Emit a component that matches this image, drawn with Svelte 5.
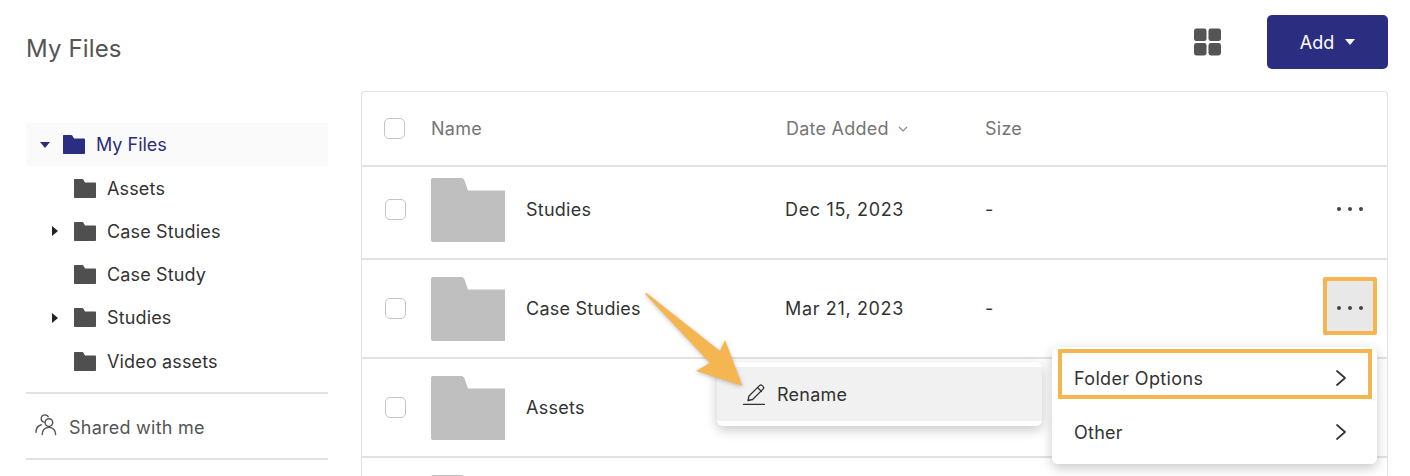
<script>
  const tree = [
    { name: "Assets", caret: false },
    { name: "Case Studies", caret: true },
    { name: "Case Study", caret: false },
    { name: "Studies", caret: true },
    { name: "Video assets", caret: false }
  ];

  // the last two rows sit behind the menu or below the fold, only their folders show
  const files = [
    { name: "Studies", date: "Dec 15, 2023", size: "-" },
    { name: "Case Studies", date: "Mar 21, 2023", size: "-", open: true },
    { name: "Assets", date: "", size: "" },
    { name: "", date: "", size: "" }
  ];
</script>

{#snippet smallFolder()}
  <svg class="small-folder" viewBox="0 0 22 19" aria-hidden="true">
    <path d="M1 0h7.2c.5 0 .9.2 1.1.6L11 3.6h10c.6 0 1 .4 1 1V18c0 .6-.4 1-1 1H1c-.6 0-1-.4-1-1V1c0-.6.4-1 1-1z" fill="currentColor" />
  </svg>
{/snippet}

{#snippet chevron()}
  <svg class="chevron" viewBox="0 0 10 16" aria-hidden="true">
    <path d="M1 1 9 8 1 15" fill="none" stroke="#333" stroke-width="1.700" stroke-linecap="round" stroke-linejoin="round" />
  </svg>
{/snippet}

<div class="page">
  <header class="top">
    <h1>My Files</h1>
    <div class="actions">
      <svg class="grid-icon" viewBox="0 0 28 28" aria-hidden="true">
        <rect x="0" y="0" width="13" height="13" rx="2.5" />
        <rect x="15" y="0" width="13" height="13" rx="2.5" />
        <rect x="0" y="15" width="13" height="13" rx="2.5" />
        <rect x="15" y="15" width="13" height="13" rx="2.5" />
      </svg>
      <button class="add">Add <span class="add-caret"></span></button>
    </div>
  </header>

  <div class="main">
    <aside class="side">
      <div class="tree-root">
        <span class="caret-down"></span>
        {@render smallFolder()}
        <span>My Files</span>
      </div>
      {#each tree as item}
        <div class="tree-item">
          <span class="caret-slot">
            {#if item.caret}<span class="caret-right"></span>{/if}
          </span>
          {@render smallFolder()}
          <span>{item.name}</span>
        </div>
      {/each}
      <div class="shared">
        <svg class="people" viewBox="0 0 24 24" aria-hidden="true">
          <circle cx="14.5" cy="10" r="4" />
          <path d="M7.5 22.5c0-4.5 3-7.5 7-7.5s7 3 7 7.5" />
          <path d="M9.5 9.5C7.3 9 6.3 7.5 6.5 5.500 6.800 3.300 8.600 1.800 11 2c1.200.1 2.300.8 2.800 1.800" />
          <path d="M1 20c0-4 2-6.800 5.500-7.800" />
        </svg>
        <span>Shared with me</span>
      </div>
    </aside>

    <section class="table">
      <div class="head">
        <span class="check head-check"></span>
        <span class="col-name">Name</span>
        <span class="col-date">
          Date Added
          <svg class="sort" viewBox="0 0 10 6" aria-hidden="true"><path d="M1 1l4 4 4-4" /></svg>
        </span>
        <span class="col-size">Size</span>
      </div>
      {#each files as file, i}
        <div class="row" class:first={i === 0}>
          <span class="check"></span>
          <svg class="big-folder" viewBox="0 0 74 64" aria-hidden="true">
            <path d="M2 0h28c1.400 0 2.500.6 3.200 1.800L37 12.500h37V64H2c-1.100 0-2-.9-2-2V2C0 .9.900 0 2 0z" fill="#bfbfbf" />
          </svg>
          <span class="file-name">{file.name}</span>
          <span class="file-date">{file.date}</span>
          <span class="file-size">{file.size}</span>
          <span class="kebab" class:open={file.open}><i></i><i></i><i></i></span>
        </div>
      {/each}

      <div class="menu rename-menu">
        <div class="rename-item">
          <svg class="pencil" viewBox="0 0 22 21" aria-hidden="true">
            <path d="M5 16.500 6 12 16.500 1.600c.8-.8 1.900-.8 2.700 0l.8.8c.8.8.8 1.900 0 2.700L9.600 15.500z" />
            <path d="M14.500 3.500l4 4" />
            <path d="M.5 20.500h21" />
          </svg>
          <span>Rename</span>
        </div>
      </div>

      <div class="menu folder-menu">
        <div class="menu-item highlighted">
          <span>Folder Options</span>
          {@render chevron()}
        </div>
        <div class="menu-item">
          <span>Other</span>
          {@render chevron()}
        </div>
      </div>

      <svg class="arrow" viewBox="0 0 100 96" aria-hidden="true">
        <path d="M0 1 1.500 0 75 58 80 47 97.500 93 51 78 65 70z" />
      </svg>
    </section>
  </div>
</div>

<style>
  :global(body) {
    margin: 0;
    background: #fff;
  }

  .page {
    height: 476px;
    overflow: hidden;
    padding: 15px 22px 0 26px;
    box-sizing: border-box;
    font-family: Inter, "Liberation Sans", sans-serif;
    font-size: 18px;
    letter-spacing: 0.25px;
    color: #333;
  }

  .top {
    display: flex;
    justify-content: space-between;
    align-items: center;
    height: 54px;
  }

  h1 {
    margin: 12px 0 0;
    font-size: 24px;
    font-weight: 400;
    letter-spacing: 0.15px;
    color: #555;
  }

  .actions {
    display: flex;
    align-items: center;
    gap: 46px;
  }

  .grid-icon {
    width: 27px;
    height: 28px;
    fill: #545454;
  }

  .add {
    width: 121px;
    height: 54px;
    border: none;
    border-radius: 5px;
    background: #2b2d80;
    color: #fff;
    font: inherit;
    letter-spacing: 0;
    display: flex;
    align-items: center;
    justify-content: center;
    gap: 11px;
    padding: 0;
  }

  .add-caret {
    border: 5px solid transparent;
    border-top: 6px solid #fff;
    border-bottom: 0;
  }

  .main {
    display: grid;
    grid-template-columns: 302px 1027px;
    column-gap: 33px;
    margin-top: 22px;
  }

  .side {
    padding-top: 32px;
    letter-spacing: 0.15px;
  }

  .tree-root,
  .tree-item {
    display: flex;
    align-items: center;
    height: 43.200px;
  }

  .tree-root {
    background: #fafafa;
    color: #2b2d80;
    padding-left: 14px;
    letter-spacing: 0;
  }

  .caret-down {
    border: 5px solid transparent;
    border-top: 6px solid #2b2d80;
    border-bottom: 0;
    margin-right: 13px;
  }

  .small-folder {
    width: 22px;
    height: 19px;
    margin-right: 11px;
    flex: none;
  }

  .tree-item {
    color: #333;
    padding-top: 1px;
    box-sizing: border-box;
  }

  .tree-item .small-folder {
    color: #4f4f4f;
  }

  .caret-slot {
    width: 48px;
    padding-left: 26px;
    box-sizing: border-box;
    display: flex;
  }

  .caret-right {
    border: 5px solid transparent;
    border-left: 6px solid #222;
    border-right: 0;
  }

  .shared {
    display: flex;
    align-items: center;
    gap: 11px;
    height: 62px;
    margin-top: 10px;
    padding: 2px 0 0 10px;
    border-top: 2px solid #e2e2e2;
    border-bottom: 2px solid #e2e2e2;
    color: #555;
    letter-spacing: 0.25px;
  }

  .people {
    width: 23px;
    height: 23px;
    margin-top: -6px;
    margin-left: -1px;
    fill: none;
    stroke: #555;
    stroke-width: 1.500;
    stroke-linecap: round;
  }

  .table {
    position: relative;
    border: 1px solid #e2e2e2;
    border-bottom: none;
    border-radius: 4px 4px 0 0;
  }

  .head {
    display: flex;
    align-items: center;
    height: 73px;
    color: #757575;
    position: relative;
  }

  .check {
    width: 21px;
    height: 21px;
    border: 1.500px solid #c4c4c4;
    border-radius: 5px;
    box-sizing: border-box;
    background: #fff;
    flex: none;
    margin-left: 23px;
  }

  .head-check {
    margin-left: 22px;
  }

  .col-name {
    margin-left: 26px;
    width: 355px;
  }

  .col-date {
    width: 199px;
    display: flex;
    align-items: center;
    gap: 9px;
  }

  .sort {
    width: 10px;
    height: 6px;
    fill: none;
    stroke: #888;
    stroke-width: 1.200;
  }

  .row {
    display: flex;
    align-items: center;
    height: 99px;
    border-top: 2px solid #e2e2e2;
    box-sizing: border-box;
  }

  .row.first {
    height: 93px;
    padding-bottom: 6px;
  }

  .big-folder {
    width: 74px;
    height: 64px;
    margin-left: 25px;
    flex: none;
  }

  .file-name {
    margin-left: 21px;
    width: 259px;
  }

  .file-date {
    width: 200px;
    letter-spacing: 0.65px;
  }

  .file-size {
    flex: 1;
  }

  .kebab {
    width: 45px;
    height: 46px;
    margin: -5px 10px 0 0;
    padding: 4px 1px 0 0;
    display: flex;
    align-items: center;
    justify-content: center;
    gap: 7px;
    border: 4px solid transparent;
  }

  .kebab i {
    width: 4px;
    height: 4px;
    border-radius: 50%;
    background: #444;
  }

  .kebab.open {
    background: #e8e8e8;
    border-color: #f5b550;
    border-radius: 2px;
  }

  .menu {
    position: absolute;
    background: #fff;
    border-radius: 6px;
    box-shadow: 0 4px 12px rgba(0, 0, 0, 0.22);
    box-sizing: border-box;
  }

  .rename-menu {
    left: 355px;
    top: 270px;
    width: 325px;
    height: 64px;
    padding: 5px 0;
  }

  .rename-item {
    display: flex;
    align-items: center;
    gap: 12px;
    height: 100%;
    background: #f1f1f1;
    padding-left: 26px;
  }

  .pencil {
    width: 22px;
    height: 21px;
    fill: none;
    stroke: #333;
    stroke-width: 1.300;
    stroke-linejoin: round;
    stroke-linecap: round;
  }

  .folder-menu {
    left: 690px;
    top: 255px;
    width: 325px;
    height: 117px;
  }

  .menu-item {
    display: flex;
    align-items: center;
    justify-content: space-between;
    height: 50px;
    margin: 2px 5px 0 6px;
    padding: 0 22px 0 12px;
    box-sizing: border-box;
    border: 4px solid transparent;
  }

  .menu-item + .menu-item {
    margin-top: 6px;
    height: 54px;
  }

  .menu-item.highlighted {
    border-color: #f5b550;
    padding-top: 8px;
    letter-spacing: 0.35px;
  }

  .chevron {
    width: 10px;
    height: 16px;
  }

  .arrow {
    position: absolute;
    left: 283px;
    top: 201px;
    width: 100px;
    height: 96px;
    fill: #f5b550;
    filter: drop-shadow(0 1px 2px rgba(0, 0, 0, 0.25));
  }
</style>
